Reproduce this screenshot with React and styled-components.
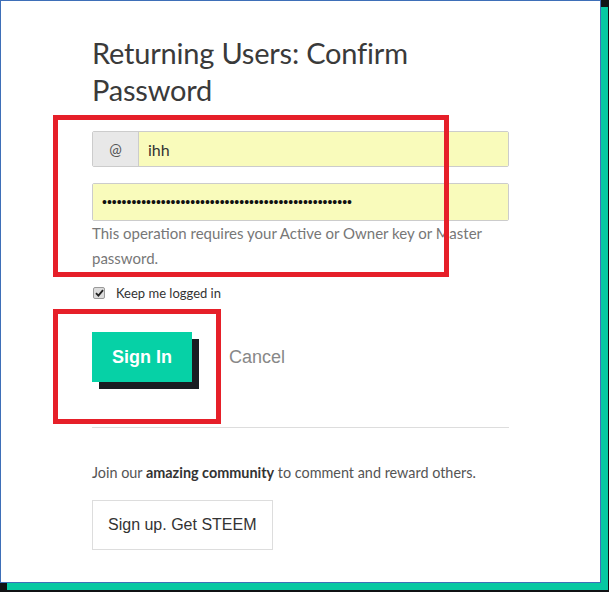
import React from 'react';
import styled, { createGlobalStyle } from 'styled-components';

const Global = createGlobalStyle`
    html, body {
        margin: 0;
        padding: 0;
        background: #101214;
    }
    * {
        box-sizing: border-box;
    }
`;

const Page = styled.div`
    min-height: 100vh;
    padding: 0 8px 9px 0;
`;

const Modal = styled.div`
    position: relative;
    width: 601px;
    height: 583px;
    background: #fff;
    border: 1px solid #3e6fb8;
    box-shadow: 7px 7px 0 #07c8a2;
    padding: 33px 91px 0 91px;
    font-family: Lato, 'Noto Sans', sans-serif;
`;

const Title = styled.h1`
    margin: 0;
    font-size: 29px;
    font-weight: 400;
    line-height: 37px;
    color: #3a3a3a;
    letter-spacing: -0.2px;
`;

const InputGroup = styled.div`
    display: flex;
    height: ${(p) => p.$h || 36}px;
    margin-top: ${(p) => p.$top || 0}px;
    border: 1px solid #ccc;
    border-radius: 2px;
    overflow: hidden;
`;

const Prefix = styled.span`
    width: 46px;
    display: flex;
    align-items: center;
    justify-content: center;
    background: #e8e8e8;
    border-right: 1px solid #ccc;
    color: #555;
    font-size: 15px;
`;

const Field = styled.input`
    flex: 1;
    border: none;
    outline: none;
    background: #f9fbbb;
    padding: 0 9px;
    font-family: Lato, 'Noto Sans', sans-serif;
    font-size: 16px;
    color: #333;

    &[type='password'] {
        font-family: 'Liberation Sans', sans-serif;
        font-size: 14px;
        color: #111;
    }
`;

const Help = styled.p`
    margin: 0;
    font-size: 15px;
    line-height: 25px;
    color: #777;
`;

const CheckRow = styled.label`
    display: flex;
    align-items: center;
    gap: 11px;
    margin-top: 14px;
    padding-left: 1px;
    font-size: 13px;
    color: #333;
`;

const CheckBox = styled.span`
    width: 12px;
    height: 12px;
    border: 1px solid #9a9a9a;
    border-radius: 2px;
    background: #dcdcdc;
    display: flex;
    align-items: center;
    justify-content: center;
`;

const Actions = styled.div`
    display: flex;
    align-items: center;
    gap: 37px;
    margin-top: 31px;
`;

const SignIn = styled.button`
    width: 100px;
    height: 50px;
    border: none;
    background: #06d1a6;
    box-shadow: 7px 7px 0 #191c21;
    color: #fff;
    font-family: 'Liberation Sans', Arial, sans-serif;
    font-weight: 700;
    font-size: 18px;
    cursor: pointer;
`;

const Cancel = styled.span`
    font-family: 'Liberation Sans', Arial, sans-serif;
    font-size: 18px;
    color: #888;
`;

const Divider = styled.hr`
    margin: 45px 0 0 0;
    border: none;
    border-top: 1px solid #ddd;
`;

const Join = styled.p`
    margin: 36px 0 0 0;
    font-size: 14.4px;
    color: #555;

    b {
        color: #333;
        font-weight: 700;
    }
`;

const SignUp = styled.button`
    margin-top: 19px;
    height: 50px;
    padding: 0 15px;
    background: #fff;
    border: 1px solid #ddd;
    font-family: 'Liberation Sans', Arial, sans-serif;
    font-size: 16px;
    color: #333;
`;

const Mark = styled.div`
    position: absolute;
    left: ${(p) => p.$x}px;
    top: ${(p) => p.$y}px;
    width: ${(p) => p.$w}px;
    height: ${(p) => p.$h}px;
    border: 5px solid #e61f29;
    pointer-events: none;
`;

export default function App() {
    return (
        <Page>
            <Global />
            <Modal>
                <Title>Returning Users: Confirm Password</Title>
                <InputGroup $top={23}>
                    <Prefix>@</Prefix>
                    <Field type='text' defaultValue='ihh' readOnly />
                </InputGroup>
                <InputGroup $top={16} $h={38}>
                    <Field type='password' defaultValue={'x'.repeat(51)} readOnly />
                </InputGroup>
                <Help>This operation requires your Active or Owner key or Master password.</Help>
                <CheckRow>
                    <CheckBox>
                        <svg width='9' height='8' viewBox='0 0 9 8'>
                            <path d='M1 4.2 L3.4 6.6 L8 1.2' stroke='#222' strokeWidth='1.8' fill='none' />
                        </svg>
                    </CheckBox>
                    Keep me logged in
                </CheckRow>
                <Actions>
                    <SignIn>Sign In</SignIn>
                    <Cancel>Cancel</Cancel>
                </Actions>
                <Divider />
                <Join>
                    Join our <b>amazing community</b> to comment and reward others.
                </Join>
                <SignUp>Sign up. Get STEEM</SignUp>
                <Mark $x={52} $y={114} $w={396} $h={162} />
                <Mark $x={52} $y={308} $w={168} $h={115} />
            </Modal>
        </Page>
    );
}
